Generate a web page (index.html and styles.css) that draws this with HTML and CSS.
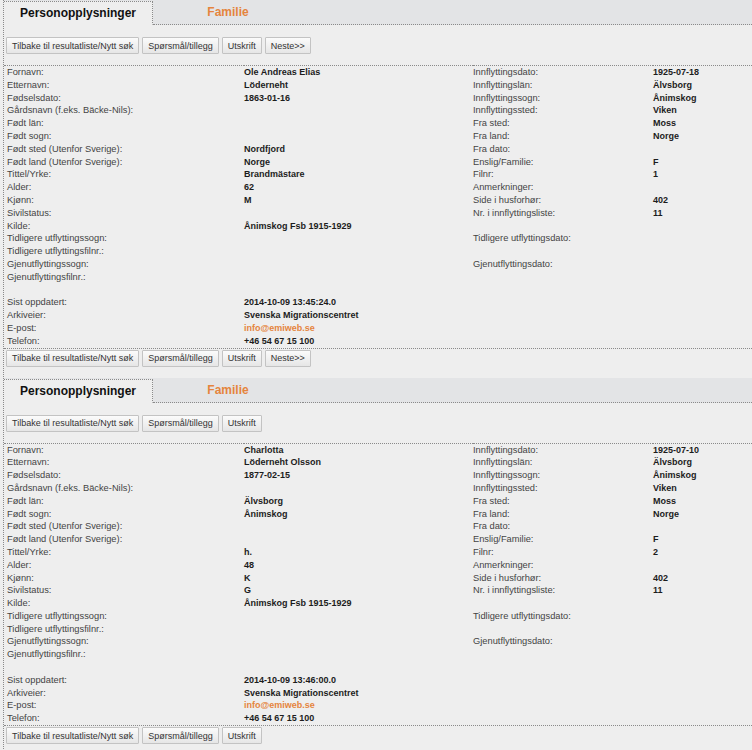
FILE: index.html
```
<!DOCTYPE html>
<html lang="no">
<head>
    <meta charset="UTF-8">
    <title>Personopplysninger</title>
    <link rel="stylesheet" href="styles.css">
</head>
<body>
    <div class="page">
        <div class="record">
            <div class="tabs">
                <div class="tab active">Personopplysninger</div>
                <div class="tab">Familie</div>
            </div>
            <div class="buttons top">
                <button>Tilbake til resultatliste/Nytt søk</button>
                <button>Spørsmål/tillegg</button>
                <button>Utskrift</button>
                <button>Neste&gt;&gt;</button>
            </div>
            <table class="info">
                <tr><td>Fornavn:</td><td class="val">Ole Andreas Elias</td><td>Innflyttingsdato:</td><td class="val">1925-07-18</td></tr>
                <tr><td>Etternavn:</td><td class="val">Löderneht</td><td>Innflyttingslän:</td><td class="val">Älvsborg</td></tr>
                <tr><td>Fødselsdato:</td><td class="val">1863-01-16</td><td>Innflyttingssogn:</td><td class="val">Ånimskog</td></tr>
                <tr><td>Gårdsnavn (f.eks. Bäcke-Nils):</td><td class="val"></td><td>Innflyttingssted:</td><td class="val">Viken</td></tr>
                <tr><td>Født län:</td><td class="val"></td><td>Fra sted:</td><td class="val">Moss</td></tr>
                <tr><td>Født sogn:</td><td class="val"></td><td>Fra land:</td><td class="val">Norge</td></tr>
                <tr><td>Født sted (Utenfor Sverige):</td><td class="val">Nordfjord</td><td>Fra dato:</td><td class="val"></td></tr>
                <tr><td>Født land (Utenfor Sverige):</td><td class="val">Norge</td><td>Enslig/Familie:</td><td class="val">F</td></tr>
                <tr><td>Tittel/Yrke:</td><td class="val">Brandmästare</td><td>Filnr:</td><td class="val">1</td></tr>
                <tr><td>Alder:</td><td class="val">62</td><td>Anmerkninger:</td><td class="val"></td></tr>
                <tr><td>Kjønn:</td><td class="val">M</td><td>Side i husforhør:</td><td class="val">402</td></tr>
                <tr><td>Sivilstatus:</td><td class="val"></td><td>Nr. i innflyttingsliste:</td><td class="val">11</td></tr>
                <tr><td>Kilde:</td><td class="val">Ånimskog Fsb 1915-1929</td><td></td><td></td></tr>
                <tr><td>Tidligere utflyttingssogn:</td><td class="val"></td><td>Tidligere utflyttingsdato:</td><td class="val"></td></tr>
                <tr><td>Tidligere utflyttingsfilnr.:</td><td class="val"></td><td></td><td></td></tr>
                <tr><td>Gjenutflyttingssogn:</td><td class="val"></td><td>Gjenutflyttingsdato:</td><td class="val"></td></tr>
                <tr><td>Gjenutflyttingsfilnr.:</td><td class="val"></td><td></td><td></td></tr>
                <tr><td>&nbsp;</td><td></td><td></td><td></td></tr>
                <tr><td>Sist oppdatert:</td><td class="val">2014-10-09 13:45:24.0</td><td></td><td></td></tr>
                <tr><td>Arkiveier:</td><td class="val">Svenska Migrationscentret</td><td></td><td></td></tr>
                <tr><td>E-post:</td><td class="val"><a href="#">info@emiweb.se</a></td><td></td><td></td></tr>
                <tr><td>Telefon:</td><td class="val">+46 54 67 15 100</td><td></td><td></td></tr>
            </table>
            <div class="buttons bottom">
                <button>Tilbake til resultatliste/Nytt søk</button>
                <button>Spørsmål/tillegg</button>
                <button>Utskrift</button>
                <button>Neste&gt;&gt;</button>
            </div>
        </div>

        <div class="record">
            <div class="tabs">
                <div class="tab active">Personopplysninger</div>
                <div class="tab">Familie</div>
            </div>
            <div class="buttons top">
                <button>Tilbake til resultatliste/Nytt søk</button>
                <button>Spørsmål/tillegg</button>
                <button>Utskrift</button>
            </div>
            <table class="info">
                <tr><td>Fornavn:</td><td class="val">Charlotta</td><td>Innflyttingsdato:</td><td class="val">1925-07-10</td></tr>
                <tr><td>Etternavn:</td><td class="val">Löderneht Olsson</td><td>Innflyttingslän:</td><td class="val">Älvsborg</td></tr>
                <tr><td>Fødselsdato:</td><td class="val">1877-02-15</td><td>Innflyttingssogn:</td><td class="val">Ånimskog</td></tr>
                <tr><td>Gårdsnavn (f.eks. Bäcke-Nils):</td><td class="val"></td><td>Innflyttingssted:</td><td class="val">Viken</td></tr>
                <tr><td>Født län:</td><td class="val">Älvsborg</td><td>Fra sted:</td><td class="val">Moss</td></tr>
                <tr><td>Født sogn:</td><td class="val">Ånimskog</td><td>Fra land:</td><td class="val">Norge</td></tr>
                <tr><td>Født sted (Utenfor Sverige):</td><td class="val"></td><td>Fra dato:</td><td class="val"></td></tr>
                <tr><td>Født land (Utenfor Sverige):</td><td class="val"></td><td>Enslig/Familie:</td><td class="val">F</td></tr>
                <tr><td>Tittel/Yrke:</td><td class="val">h.</td><td>Filnr:</td><td class="val">2</td></tr>
                <tr><td>Alder:</td><td class="val">48</td><td>Anmerkninger:</td><td class="val"></td></tr>
                <tr><td>Kjønn:</td><td class="val">K</td><td>Side i husforhør:</td><td class="val">402</td></tr>
                <tr><td>Sivilstatus:</td><td class="val">G</td><td>Nr. i innflyttingsliste:</td><td class="val">11</td></tr>
                <tr><td>Kilde:</td><td class="val">Ånimskog Fsb 1915-1929</td><td></td><td></td></tr>
                <tr><td>Tidligere utflyttingssogn:</td><td class="val"></td><td>Tidligere utflyttingsdato:</td><td class="val"></td></tr>
                <tr><td>Tidligere utflyttingsfilnr.:</td><td class="val"></td><td></td><td></td></tr>
                <tr><td>Gjenutflyttingssogn:</td><td class="val"></td><td>Gjenutflyttingsdato:</td><td class="val"></td></tr>
                <tr><td>Gjenutflyttingsfilnr.:</td><td class="val"></td><td></td><td></td></tr>
                <tr><td>&nbsp;</td><td></td><td></td><td></td></tr>
                <tr><td>Sist oppdatert:</td><td class="val">2014-10-09 13:46:00.0</td><td></td><td></td></tr>
                <tr><td>Arkiveier:</td><td class="val">Svenska Migrationscentret</td><td></td><td></td></tr>
                <tr><td>E-post:</td><td class="val"><a href="#">info@emiweb.se</a></td><td></td><td></td></tr>
                <tr><td>Telefon:</td><td class="val">+46 54 67 15 100</td><td></td><td></td></tr>
            </table>
            <div class="buttons bottom">
                <button>Tilbake til resultatliste/Nytt søk</button>
                <button>Spørsmål/tillegg</button>
                <button>Utskrift</button>
            </div>
        </div>
    </div>
</body>
</html>
```

FILE: styles.css
```
body {
    margin: 0;
    padding: 0;
    background: #eeeeee;
    font-family: "Liberation Sans", Arial, sans-serif;
    color: #444;
}

.page {
    margin-left: 3px;
    border-left: 1px dotted #8a8a8a;
}

.record {
    padding-bottom: 11px;
}

.tabs {
    display: flex;
    padding-top: 1px;
    background: #e3e4e6;
}

.tabs::after {
    content: "";
    flex: 1;
    height: 23px;
    border-bottom: 1px dotted #8a8a8a;
}

.tab {
    width: 150px;
    height: 23px;
    line-height: 23px;
    text-align: center;
    font-size: 12px;
    font-weight: bold;
    color: #e5843d;
    border-bottom: 1px dotted #8a8a8a;
}

.tab.active {
    width: 148px;
    height: 22px;
    line-height: 22px;
    color: #111;
    background: #eeeeee;
    border-top: 1px dotted #8a8a8a;
    border-right: 1px dotted #8a8a8a;
    border-bottom-color: transparent;
}

.buttons {
    display: flex;
    gap: 3px;
    padding-left: 2px;
}

.buttons.top {
    padding-top: 12px;
    padding-bottom: 11px;
}

.buttons.bottom {
    padding-top: 1px;
    border-top: 1px dotted #8a8a8a;
}

.buttons button {
    height: 17px;
    margin: 0;
    padding: 0 5px;
    font-family: "Liberation Sans", Arial, sans-serif;
    font-size: 9px;
    color: #333;
    background: linear-gradient(#fbfbfb, #e6e6e6);
    border: 1px solid #c3c3c3;
    border-radius: 1px;
}

.info {
    width: 100%;
    border-collapse: collapse;
    border-top: 1px dotted #8a8a8a;
    table-layout: fixed;
}

.info td {
    padding: 0;
    height: 12.8px;
    line-height: 12.8px;
    font-size: 9.3px;
    white-space: nowrap;
    vertical-align: middle;
}

.info td:nth-child(1) {
    width: 237px;
    padding-left: 3px;
}

.info td:nth-child(2) {
    width: 229px;
}

.info td:nth-child(3) {
    width: 180px;
}

.info td.val {
    font-size: 9px;
    font-weight: bold;
    color: #1c1c1c;
}

.info a {
    color: #e5843d;
    text-decoration: none;
}
```
